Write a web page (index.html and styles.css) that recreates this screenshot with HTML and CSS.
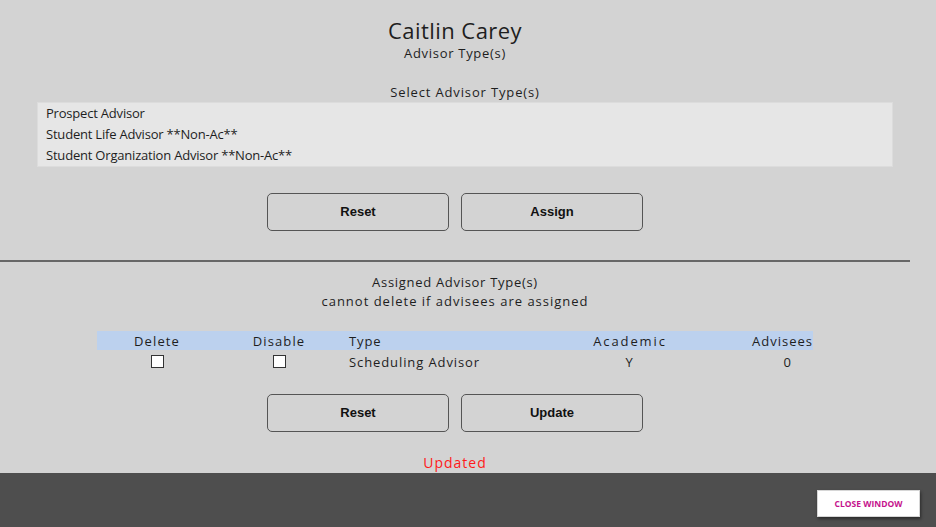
FILE: index.html
```html
<!DOCTYPE html>
<html lang="en">
<head>
<meta charset="utf-8">
<title>Advisor Type(s)</title>
<link rel="stylesheet" href="styles.css">
</head>
<body>
<div class="main">
  <h1 class="title">Caitlin Carey</h1>
  <div class="subtitle">Advisor Type(s)</div>
  <div class="select-block">
    <div class="select-label">Select Advisor Type(s)</div>
    <div class="listbox">
      <div class="option">Prospect Advisor</div>
      <div class="option">Student Life Advisor **Non-Ac**</div>
      <div class="option">Student Organization Advisor **Non-Ac**</div>
    </div>
  </div>
  <div class="btn-row first-row">
    <button class="btn">Reset</button>
    <button class="btn">Assign</button>
  </div>
  <hr class="divider">
  <div class="label assigned">Assigned Advisor Type(s)</div>
  <div class="label note">cannot delete if advisees are assigned</div>
  <div class="table">
    <div class="row head">
      <div class="c c-del">Delete</div>
      <div class="c c-dis">Disable</div>
      <div class="c c-type">Type</div>
      <div class="c c-ac">Academic</div>
      <div class="c c-adv">Advisees</div>
    </div>
    <div class="row body">
      <div class="c c-del"><span class="cb"></span></div>
      <div class="c c-dis"><span class="cb"></span></div>
      <div class="c c-type">Scheduling Advisor</div>
      <div class="c c-ac">Y</div>
      <div class="c c-adv c-num">0</div>
    </div>
  </div>
  <div class="btn-row second-row">
    <button class="btn">Reset</button>
    <button class="btn">Update</button>
  </div>
  <div class="status">Updated</div>
</div>
<div class="footer">
  <button class="close">CLOSE WINDOW</button>
</div>
</body>
</html>
```
FILE: styles.css
```css
html, body {
  margin: 0;
  padding: 0;
}
body {
  background: #d3d3d3;
  font-family: "Century Gothic", "URW Gothic", "Open Sans", "DejaVu Sans", sans-serif;
  color: #1e1e1e;
  font-size: 13px;
  letter-spacing: 0.8px;
  width: 936px;
  height: 527px;
  overflow: hidden;
}
.main {
  width: 910px;
  height: 473px;
  padding-top: 16px;
  box-sizing: border-box;
  display: flex;
  flex-direction: column;
}
.title {
  margin: 0;
  font-weight: normal;
  font-size: 22px;
  letter-spacing: 0.45px;
  line-height: 28px;
  text-align: center;
}
.subtitle {
  text-align: center;
  line-height: 18px;
  letter-spacing: 0.7px;
}
.select-block {
  margin: 21px 0 0 37px;
  width: 856px;
}
.select-label {
  text-align: center;
  line-height: 19px;
  letter-spacing: 0.85px;
}
.listbox {
  box-sizing: border-box;
  background: #e6e6e6;
  border: 1px solid #dcdcdc;
  display: flex;
  flex-direction: column;
}
.option {
  line-height: 21px;
  height: 21px;
  padding-left: 8px;
  letter-spacing: -0.2px;
}
.btn-row {
  display: flex;
  justify-content: center;
  gap: 12px;
}
.first-row { margin-top: 26px; }
.second-row { margin-top: 20px; }
.btn {
  width: 182px;
  height: 38px;
  background: transparent;
  border: 1px solid #555;
  border-radius: 5px;
  font-family: "Liberation Sans", Arial, sans-serif;
  font-weight: bold;
  font-size: 13px;
  letter-spacing: 0;
  color: #111;
  padding: 0 0 2px 0;
}
.divider {
  margin: 29px 0 0 0;
  border: 0;
  height: 2px;
  background: #676767;
  width: 910px;
}
.label {
  text-align: center;
  line-height: 19px;
}
.assigned { margin-top: 11px; letter-spacing: 0.7px; }
.note { letter-spacing: 1px; }
.table {
  margin: 20px 0 0 97px;
  width: 716px;
}
.row {
  display: grid;
  grid-template-columns: 120px 124px 219px 140px 113px;
  align-items: center;
}
.row.head {
  height: 19px;
  background: #bcd1ee;
}
.row.body {
  height: 24px;
}
.c-del, .c-dis { text-align: center; letter-spacing: 1.1px; }
.c-ac { text-align: center; letter-spacing: 1.9px; }
.c-type { padding-left: 8px; letter-spacing: 0.9px; }
.c-adv { text-align: right; letter-spacing: 1px; }
.c-num { padding-right: 21px; }
.cb {
  display: block;
  margin: -2px auto 0;
  width: 11px;
  height: 11px;
  background: #fff;
  border: 1px solid #333;
}
.status {
  margin-top: 22px;
  text-align: center;
  line-height: 18px;
  font-size: 14px;
  letter-spacing: 1px;
  color: #ff1a1a;
}
.footer {
  height: 54px;
  background: #4e4e4e;
  display: flex;
  justify-content: flex-end;
  align-items: flex-start;
  padding: 17px 16px 0 0;
  box-sizing: border-box;
}
.close {
  width: 103px;
  height: 27px;
  background: #fff;
  border: 1px solid #d6d6d6;
  box-shadow: 1px 2px 3px rgba(0, 0, 0, 0.45);
  color: #c5128d;
  font-family: "Century Gothic", "URW Gothic", "Open Sans", sans-serif;
  font-weight: bold;
  font-size: 8.5px;
  letter-spacing: 0;
  padding: 0;
}
```
